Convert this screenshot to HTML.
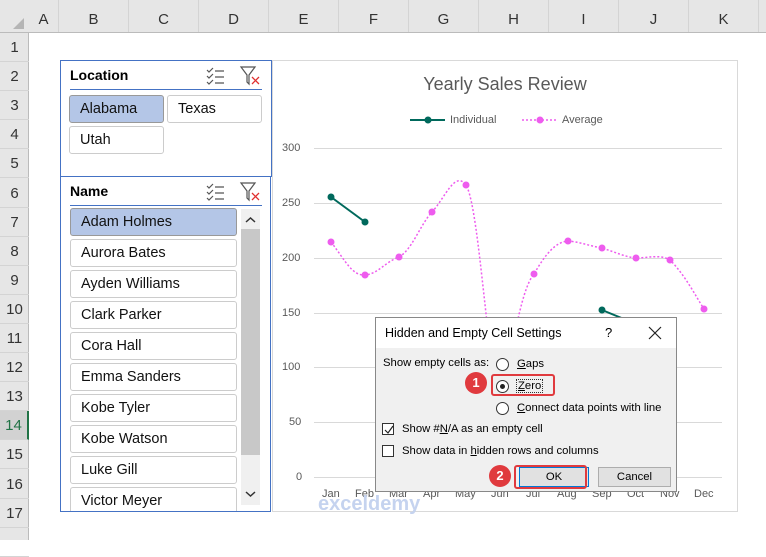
<!DOCTYPE html>
<html><head><meta charset="utf-8"><style>
*{margin:0;padding:0;box-sizing:border-box}
body{width:766px;height:540px;overflow:hidden;background:#fff;font-family:"Liberation Sans",sans-serif;position:relative}
.a{position:absolute}
.ch{position:absolute;top:0;height:32px;line-height:40px;text-align:center;font-size:15px;color:#333;border-right:1px solid #d4d4d4}
.rh{position:absolute;left:0;width:29px;text-align:center;font-size:15px;color:#333;border-bottom:1px solid #d4d4d4;line-height:29px;height:29.1px}
.it{position:absolute;left:70px;width:167px;height:28px;border:1px solid #ccc;border-radius:3px;background:#fff;font-size:14.5px;line-height:27px;padding-left:10px;color:#111}
.sel{background:#b4c6e7;border-color:#999}
.ax{position:absolute;font-size:11px;color:#595959}
</style></head><body>
<div class="a" style="left:0;top:0;width:766px;height:33px;background:#e6e6e6;border-bottom:1px solid #bbb"></div>
<div class="a" style="left:0;top:33px;width:29px;height:507px;background:#e6e6e6;border-right:1px solid #bbb"></div>
<div class="a" style="left:13px;top:18px;width:0;height:0;border-left:11px solid transparent;border-bottom:11px solid #b5b5b5"></div>
<div class="ch" style="left:29px;width:30px">A</div>
<div class="ch" style="left:59px;width:70px">B</div>
<div class="ch" style="left:129px;width:70px">C</div>
<div class="ch" style="left:199px;width:70px">D</div>
<div class="ch" style="left:269px;width:70px">E</div>
<div class="ch" style="left:339px;width:70px">F</div>
<div class="ch" style="left:409px;width:70px">G</div>
<div class="ch" style="left:479px;width:70px">H</div>
<div class="ch" style="left:549px;width:70px">I</div>
<div class="ch" style="left:619px;width:70px">J</div>
<div class="ch" style="left:689px;width:70px">K</div>
<div class="rh" style="top:33px">1</div><div class="rh" style="top:62.1px">2</div><div class="rh" style="top:91.2px">3</div><div class="rh" style="top:120.3px">4</div><div class="rh" style="top:149.4px">5</div><div class="rh" style="top:178.5px">6</div><div class="rh" style="top:207.6px">7</div><div class="rh" style="top:236.7px">8</div><div class="rh" style="top:265.8px">9</div><div class="rh" style="top:294.9px">10</div><div class="rh" style="top:324px">11</div><div class="rh" style="top:353.1px">12</div><div class="rh" style="top:382.2px">13</div><div class="rh" style="top:411.3px;background:#d2d2d2;color:#217346;border-right:2px solid #217346">14</div><div class="rh" style="top:440.4px">15</div><div class="rh" style="top:469.5px">16</div><div class="rh" style="top:498.6px">17</div><div class="rh" style="top:527.7px"></div>

<div class="a" style="left:60px;top:60px;width:212px;height:117px;border:1px solid #4472c4;background:#fff"></div>
<div class="a" style="left:70px;top:67px;font-size:14px;font-weight:bold">Location</div>
<div class="a" style="left:70px;top:89px;width:192px;height:1px;background:#4472c4"></div>
<div class="it sel" style="left:69px;top:95px;width:95px">Alabama</div>
<div class="it" style="left:167px;top:95px;width:95px">Texas</div>
<div class="it" style="left:69px;top:126px;width:95px">Utah</div>
<div class="a" style="left:60px;top:176px;width:211px;height:336px;border:1px solid #4472c4;background:#fff;overflow:hidden"></div>
<div class="a" style="left:70px;top:183px;font-size:14px;font-weight:bold">Name</div>
<div class="a" style="left:70px;top:205px;width:192px;height:1px;background:#4472c4"></div>
<svg class="a" style="left:205px;top:66px" width="60" height="140" viewBox="0 0 60 140">
<g stroke="#555" fill="none" stroke-width="1.2">
<path d="M2 4l2 2 4-4M2 10l2 2 4-4M2 16l2 2 4-4M10 5h9M10 11h9M10 17h9"/>
<path d="M36 1h14l-6 8v9l-2-2v-7z"/>
<path d="M2 120l2 2 4-4M2 126l2 2 4-4M2 132l2 2 4-4M10 121h9M10 127h9M10 133h9"/>
<path d="M36 117h14l-6 8v9l-2-2v-7z"/>
</g>
<path d="M47 11l7 7M54 11l-7 7M47 127l7 7M54 127l-7 7" stroke="#e03030" stroke-width="1.3"/>
</svg>
<div class="it sel" style="top:208px">Adam Holmes</div>
<div class="it" style="top:239px">Aurora Bates</div>
<div class="it" style="top:270px">Ayden Williams</div>
<div class="it" style="top:301px">Clark Parker</div>
<div class="it" style="top:332px">Cora Hall</div>
<div class="it" style="top:363px">Emma Sanders</div>
<div class="it" style="top:394px">Kobe Tyler</div>
<div class="it" style="top:425px">Kobe Watson</div>
<div class="it" style="top:456px">Luke Gill</div>
<div class="a" style="left:60px;top:487px;width:211px;height:24px;overflow:hidden"><div class="it" style="left:10px;top:0">Victor Meyer</div></div>
<div class="a" style="left:241px;top:209px;width:19px;height:296px;background:#f0f0f0"></div>
<div class="a" style="left:241px;top:229px;width:19px;height:226px;background:#c8c8c8"></div>
<svg class="a" style="left:241px;top:209px" width="19" height="296"><path d="M5 13l4.5-4 4.5 4M5 283l4.5 4 4.5-4" stroke="#333" stroke-width="1.5" fill="none"/></svg>

<div class="a" style="left:272px;top:60px;width:466px;height:452px;border:1px solid #d9d9d9;background:#fff"></div>
<div class="a" style="left:272px;top:74px;width:466px;text-align:center;font-size:18px;color:#595959">Yearly Sales Review</div>
<svg class="a" style="left:0;top:0" width="766" height="540">
<g stroke="#d9d9d9" stroke-width="1">
<path d="M314 148.5H722M314 203.5H722M314 258.5H722M314 313.5H722M314 367.5H722M314 422.5H722M314 477.5H722"/>
</g>
<path d="M410 120H445" stroke="#00695c" stroke-width="2"/><circle cx="428" cy="120" r="3.5" fill="#00695c"/>
<path d="M522 120H557" stroke="#ee5cee" stroke-width="1.5" stroke-dasharray="2 2"/><circle cx="540" cy="120" r="3.5" fill="#ee5cee"/>
<path d="M331 242 C345 260 352 276 365 275 C378 274 385 262 399 257 C412 250 420 225 432 212 C445 198 455 170 466 185 C478 205 485 330 500 422 C510 360 520 290 534 274 C545 255 555 242 568 241 C580 242 590 246 602 248 C615 252 625 257 636 258 C648 258 660 254 670 260 C685 275 695 295 704 309" stroke="#ee5cee" stroke-width="1.5" fill="none" stroke-dasharray="2 2"/>
<g fill="#ee5cee"><circle cx="331" cy="242" r="3.5"/><circle cx="365" cy="275" r="3.5"/><circle cx="399" cy="257" r="3.5"/><circle cx="432" cy="212" r="3.5"/><circle cx="466" cy="185" r="3.5"/><circle cx="534" cy="274" r="3.5"/><circle cx="568" cy="241" r="3.5"/><circle cx="602" cy="248" r="3.5"/><circle cx="636" cy="258" r="3.5"/><circle cx="670" cy="260" r="3.5"/><circle cx="704" cy="309" r="3.5"/></g>
<path d="M331 197L365 222M602 310L636 324" stroke="#00695c" stroke-width="2"/>
<g fill="#00695c"><circle cx="331" cy="197" r="3.5"/><circle cx="365" cy="222" r="3.5"/><circle cx="602" cy="310" r="3.5"/></g>
</svg>
<div class="ax" style="left:450px;top:114px">Individual</div>
<div class="ax" style="left:562px;top:114px">Average</div>
<div class="ax" style="left:282px;top:142px">300</div>
<div class="ax" style="left:282px;top:197px">250</div>
<div class="ax" style="left:282px;top:252px">200</div>
<div class="ax" style="left:282px;top:307px">150</div>
<div class="ax" style="left:282px;top:361px">100</div>
<div class="ax" style="left:289px;top:416px">50</div>
<div class="ax" style="left:296px;top:471px">0</div>
<div class="ax" style="left:322px;top:488px">Jan</div><div class="ax" style="left:355px;top:488px">Feb</div><div class="ax" style="left:389px;top:488px">Mar</div><div class="ax" style="left:423px;top:488px">Apr</div><div class="ax" style="left:455px;top:488px">May</div><div class="ax" style="left:491px;top:488px">Jun</div><div class="ax" style="left:526px;top:488px">Jul</div><div class="ax" style="left:557px;top:488px">Aug</div><div class="ax" style="left:592px;top:488px">Sep</div><div class="ax" style="left:627px;top:488px">Oct</div><div class="ax" style="left:660px;top:488px">Nov</div><div class="ax" style="left:694px;top:488px">Dec</div>
<div class="a" style="left:318px;top:493px;font-size:20px;font-weight:bold;color:#c5d3ef">exceldemy</div>

<div class="a" style="left:375px;top:317px;width:302px;height:175px;background:#f0f0f0;border:1px solid #888;font-size:11.3px;color:#000">
<div class="a" style="left:0;top:0;width:300px;height:30px;background:#fff"></div>
<div class="a" style="left:9px;top:8px;font-size:12.5px">Hidden and Empty Cell Settings</div>
<div class="a" style="left:229px;top:7px;font-size:13px">?</div>
<svg class="a" style="left:272px;top:8px" width="14" height="14"><path d="M1 1l12 12M13 1L1 13" stroke="#222" stroke-width="1.2"/></svg>
<div class="a" style="left:7px;top:39px">Show empty cells as:</div>
<div class="a" style="left:120px;top:40px;width:13px;height:13px;border:1px solid #333;border-radius:50%;background:#fff"></div>
<div class="a" style="left:141px;top:40px"><u>G</u>aps</div>
<div class="a" style="left:120px;top:62px;width:13px;height:13px;border:1px solid #333;border-radius:50%;background:#fff"><div class="a" style="left:3px;top:3px;width:5px;height:5px;border-radius:50%;background:#222"></div></div>
<div class="a" style="left:140px;top:61px;border:1px dotted #333;padding:0 1px"><u>Z</u>ero</div>
<div class="a" style="left:120px;top:84px;width:13px;height:13px;border:1px solid #333;border-radius:50%;background:#fff"></div>
<div class="a" style="left:141px;top:84px"><u>C</u>onnect data points with line</div>
<div class="a" style="left:6px;top:105px;width:12px;height:12px;border:1px solid #333;background:#fff"><svg class="a" style="left:1px;top:1px" width="10" height="10"><path d="M1 5l3 3 5-7" stroke="#222" stroke-width="1.2" fill="none"/></svg></div>
<div class="a" style="left:26px;top:105px">Show #<u>N</u>/A as an empty cell</div>
<div class="a" style="left:6px;top:127px;width:12px;height:12px;border:1px solid #333;background:#fff"></div>
<div class="a" style="left:26px;top:127px">Show data in <u>h</u>idden rows and columns</div>
<div class="a" style="left:143px;top:149px;width:70px;height:20px;border:1px solid #0078d7;background:#e1e1e1;text-align:center;line-height:18px">OK</div>
<div class="a" style="left:222px;top:149px;width:73px;height:20px;border:1px solid #adadad;background:#e1e1e1;text-align:center;line-height:18px">Cancel</div>
</div>
<div class="a" style="left:491px;top:374px;width:64px;height:22px;border:2px solid #e03a3e;border-radius:3px"></div>
<div class="a" style="left:514px;top:465px;width:73px;height:24px;border:2px solid #e03a3e;border-radius:3px"></div>
<div class="a" style="left:465px;top:372px;width:22px;height:22px;border-radius:50%;background:#e03a3e;color:#fff;font-size:13px;font-weight:bold;text-align:center;line-height:22px">1</div>
<div class="a" style="left:489px;top:465px;width:22px;height:22px;border-radius:50%;background:#e03a3e;color:#fff;font-size:13px;font-weight:bold;text-align:center;line-height:22px">2</div>
</body></html>
